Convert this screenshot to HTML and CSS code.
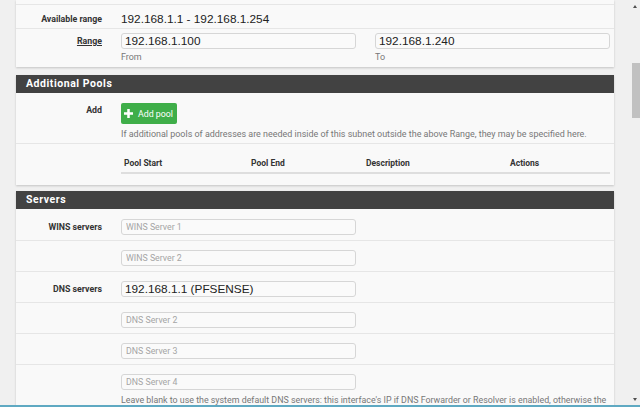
FILE: index.html
```html
<!DOCTYPE html>
<html lang="en">
<head>
<meta charset="utf-8">
<title>DHCP Server</title>
<link rel="stylesheet" href="styles.css">
</head>
<body>
<div class="screen">
  <div class="viewport">
    <main class="content">
      <section class="panel panel-top">
        <div class="row sliver"></div>
        <div class="row row-avail">
          <div class="label">Available range</div>
          <div class="value">192.168.1.1 - 192.168.1.254</div>
        </div>
        <div class="row row-range">
          <div class="label label-mid"><span class="underline">Range</span></div>
          <div class="pair">
            <div class="field">
              <input class="input input-big" type="text" value="192.168.1.100">
              <div class="help">From</div>
            </div>
            <div class="field">
              <input class="input input-big" type="text" value="192.168.1.240">
              <div class="help">To</div>
            </div>
          </div>
        </div>
      </section>

      <section class="panel">
        <h2 class="panel-heading">Additional Pools</h2>
        <div class="row row-add">
          <div class="label label-add">Add</div>
          <div class="cell">
            <button class="btn-success" type="button">
              <svg class="plus" viewBox="0 0 10 10" width="9" height="9" aria-hidden="true"><rect x="3.6" y="0" width="2.8" height="10" fill="#fff"/><rect x="0" y="3.6" width="10" height="2.8" fill="#fff"/></svg>
              <span>Add pool</span>
            </button>
            <div class="help help-add">If additional pools of addresses are needed inside of this subnet outside the above Range, they may be specified here.</div>
          </div>
        </div>
        <div class="row row-table">
          <div class="label"></div>
          <div class="cell">
            <table class="pools">
              <thead>
                <tr><th class="c1">Pool Start</th><th class="c2">Pool End</th><th class="c3">Description</th><th class="c4">Actions</th></tr>
              </thead>
            </table>
          </div>
        </div>
      </section>

      <section class="panel">
        <h2 class="panel-heading">Servers</h2>
        <div class="row row-srv first">
          <div class="label label-mid">WINS servers</div>
          <div class="cell"><input class="input" type="text" placeholder="WINS Server 1"></div>
        </div>
        <div class="row row-srv">
          <div class="label"></div>
          <div class="cell"><input class="input" type="text" placeholder="WINS Server 2"></div>
        </div>
        <div class="row row-srv">
          <div class="label label-mid">DNS servers</div>
          <div class="cell"><input class="input input-big" type="text" value="192.168.1.1 (PFSENSE)"></div>
        </div>
        <div class="row row-srv">
          <div class="label"></div>
          <div class="cell"><input class="input" type="text" placeholder="DNS Server 2"></div>
        </div>
        <div class="row row-srv">
          <div class="label"></div>
          <div class="cell"><input class="input" type="text" placeholder="DNS Server 3"></div>
        </div>
        <div class="row row-srv">
          <div class="label"></div>
          <div class="cell">
            <input class="input" type="text" placeholder="DNS Server 4">
            <div class="help help-dns">Leave blank to use the system default DNS servers: this interface's IP if DNS Forwarder or Resolver is enabled, otherwise the servers configured on the System / General Setup page.</div>
          </div>
        </div>
      </section>
    </main>
    <div class="scrollbar">
      <div class="arrow arrow-up"></div>
      <div class="thumb"></div>
      <div class="track-fill"></div>
      <div class="arrow arrow-down"></div>
    </div>
  </div>
  <div class="bluebar"></div>
</div>
</body>
</html>
```

FILE: styles.css
```css
html, body {
  margin: 0;
  padding: 0;
  background: #f0f0f0;
}

.screen {
  width: 640px;
  height: 407px;
  display: flex;
  flex-direction: column;
  overflow: hidden;
  font-family: Roboto, "Liberation Sans", Arial, sans-serif;
  color: #333;
}

.viewport {
  flex: 0 0 405px;
  display: flex;
  overflow: hidden;
}

.content {
  width: 598px;
  padding: 0 13px 0 16px;
  flex: 0 0 auto;
}

.bluebar {
  flex: 0 0 2px;
  background: #5fa9c2;
}

/* scrollbar */
.scrollbar {
  flex: 1 1 auto;
  display: flex;
  flex-direction: column;
  align-items: flex-end;
}

.arrow {
  width: 0;
  height: 0;
  border-left: 2.5px solid transparent;
  border-right: 2.5px solid transparent;
  margin-right: 3px;
}

.arrow-up {
  border-bottom: 3px solid #505050;
  margin-top: 5px;
}

.arrow-down {
  border-top: 3px solid #505050;
  margin-bottom: 4px;
}

.thumb {
  width: 8px;
  height: 55px;
  background: #c1c1c1;
  margin-top: 55px;
}

.track-fill {
  flex: 1 1 auto;
}

/* panels */
.panel {
  background: #f9f9f9;
  box-shadow: 0 1px 2px rgba(0, 0, 0, 0.18);
  margin-bottom: 8px;
}

.panel + .panel {
  margin-bottom: 6px;
}

.panel-heading {
  margin: 0;
  height: 18px;
  line-height: 18px;
  padding-left: 10px;
  background: #424242;
  color: #fff;
  font-size: 10.5px;
  font-weight: 700;
  letter-spacing: 0.55px;
}

.row {
  display: grid;
  grid-template-columns: 105px 1fr;
  border-top: 1px solid #e6e6e6;
}

.row.sliver {
  height: 4px;
  border-top: 0;
}

.panel-heading + .row {
  border-top: 0;
}

.label {
  text-align: right;
  padding-right: 19px;
  font-size: 8.8px;
  font-weight: 700;
  color: #333;
}

.underline {
  text-decoration: underline;
}

.cell {
  padding-right: 4px;
}

/* available range */
.row-avail {
  height: 24px;
  box-sizing: border-box;
  padding-top: 7px;
}

.row-avail .label {
  line-height: 14px;
}

.value {
  font-family: "Liberation Sans", Arial, sans-serif;
  font-size: 11.8px;
  line-height: 14px;
  color: #222;
}

/* range */
.row-range {
  padding: 4px 0 5px;
}

.label-mid {
  line-height: 16px;
}

.pair {
  display: grid;
  grid-template-columns: 235px 235px;
  column-gap: 19px;
}

.input {
  display: block;
  box-sizing: border-box;
  width: 235px;
  height: 16px;
  margin: 0;
  padding: 0 4px;
  border: 1px solid #d6d6d6;
  border-radius: 3px;
  background: #fafafa;
  font-family: Roboto, "Liberation Sans", Arial, sans-serif;
  font-size: 8.8px;
  color: #999;
  outline: none;
}

.input::placeholder {
  color: #a5a5a5;
}

.input-big {
  font-family: "Liberation Sans", Arial, sans-serif;
  font-size: 11.8px;
  color: #222;
  padding-left: 3px;
}

.help {
  font-size: 8.95px;
  line-height: 10px;
  color: #777;
  margin-top: 3px;
}

/* add row */
.row-add {
  padding: 10px 0 4px;
}

.label-add {
  line-height: 10px;
  padding-top: 2px;
}

.btn-success {
  display: flex;
  align-items: center;
  gap: 5px;
  box-sizing: border-box;
  width: 56px;
  height: 21px;
  margin: 0;
  padding: 0 0 0 3px;
  border: 0;
  border-radius: 2px;
  background: #3fae49;
  color: #fff;
  font-family: Roboto, "Liberation Sans", Arial, sans-serif;
  font-size: 8.8px;
}

.help-add {
  margin-top: 5px;
}

/* pools table */
.row-table {
  padding: 10px 0 11px;
}

.pools {
  width: 489px;
  border-collapse: collapse;
}

.pools th {
  text-align: left;
  font-size: 8.5px;
  font-weight: 700;
  line-height: 11px;
  padding: 4px 3px 3px;
  border-bottom: 2px solid #dedede;
  color: #333;
}

.pools .c1 { width: 121px; }
.pools .c2 { width: 109px; }
.pools .c3 { width: 138px; }

/* servers */
.row-srv {
  padding: 9px 0 5px;
}

.row-srv.first {
  padding-top: 10px;
}

.help-dns {
  margin-top: 5px;
  font-size: 8.85px;
  margin-right: -2px;
}
```
